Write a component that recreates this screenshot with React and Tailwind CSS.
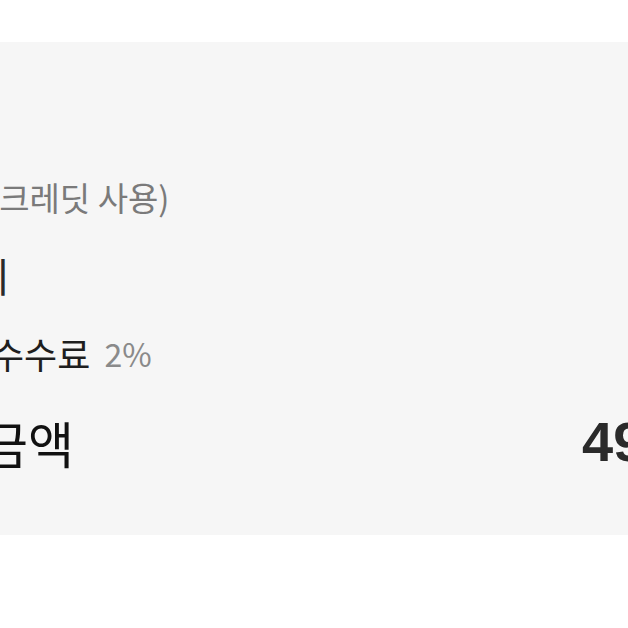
export default function App() {
  return (
    <div className="w-[628px] h-[628px] bg-white overflow-hidden" style={{ fontFamily: '"Noto Sans CJK KR", "Noto Sans", sans-serif' }}>
      <div className="mt-[42px] h-[493px] bg-[#f6f6f6] overflow-hidden flex flex-col pt-[135px]">
        <div className="h-[40px] flex items-center -ml-[12px] text-[33px] leading-none text-[#7a7a7a] whitespace-nowrap">
          (크레딧 사용)
        </div>
        <div className="mt-[38px] h-[40px] flex items-center -ml-[27px] text-[40px] leading-none text-[#2a2a2a] whitespace-nowrap">
          이
        </div>
        <div className="mt-[38px] h-[40px] flex items-center -ml-[9px] leading-none whitespace-nowrap">
          <span className="text-[36px] text-[#1e1e1e]">수수료</span>
          <span className="ml-[14px] text-[32px] text-[#8a8a8a]">2%</span>
        </div>
        <div className="mt-[43px] h-[52px] flex items-center -ml-[18px] leading-none whitespace-nowrap">
          <span className="text-[50px] text-[#111]">금액</span>
          <span
            className="ml-[508px] text-[56px] font-bold text-[#2a2a2a]"
            style={{ fontFamily: '"Liberation Sans", "Noto Sans CJK KR", sans-serif' }}
          >
            49,000원
          </span>
        </div>
      </div>
    </div>
  )
}
